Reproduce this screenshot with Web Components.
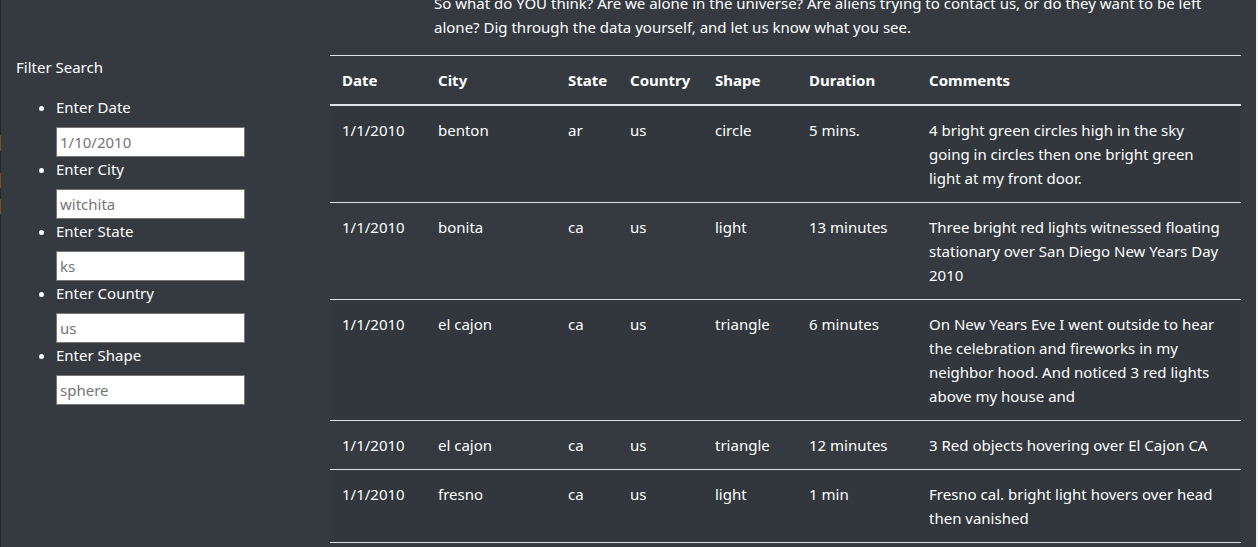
<!DOCTYPE html>
<html lang="en">
<head>
<meta charset="utf-8">
<title>UFO Sightings</title>
<style>
html, body { margin: 0; height: 100%; overflow: hidden; }
body { background: #f1f1f1; color: #fff; font: 15px/24px "Noto Sans", "Open Sans", sans-serif; }
</style>
</head>
<body>
<sightings-page>
  <filter-panel slot="filters" heading="Filter Search">
    <filter-field label="Enter Date" placeholder="1/10/2010"></filter-field>
    <filter-field label="Enter City" placeholder="witchita"></filter-field>
    <filter-field label="Enter State" placeholder="ks"></filter-field>
    <filter-field label="Enter Country" placeholder="us"></filter-field>
    <filter-field label="Enter Shape" placeholder="sphere"></filter-field>
  </filter-panel>
  <article-intro>So what do YOU think? Are we alone in the universe? Are aliens trying to contact us, or do they want to be left alone? Dig through the data yourself, and let us know what you see.</article-intro>
  <sightings-table></sightings-table>
</sightings-page>

<script>
class ShadowElement extends HTMLElement {
  constructor() {
    super();
    this.attachShadow({ mode: "open" });
  }
  connectedCallback() {
    this.shadowRoot.innerHTML = this.render();
  }
}

customElements.define("sightings-page", class extends ShadowElement {
  render() {
    return `<style>
      :host { display: grid; grid-template-columns: 1px minmax(0, 1fr); height: 100%; margin-right: 2px; overflow: hidden; background: #343a40; }
      .edge { background: linear-gradient(#24282c 135px, #7a5218 135px 151px, #24282c 151px 173px, #7a5218 173px 188px, #24282c 188px 199px, #7a5218 199px 214px, #24282c 214px); }
      .layout { display: grid; grid-template-columns: 314px minmax(0, 1fr); padding: 0 15px; }
      aside { padding-top: 55px; }
      main { min-width: 0; }
    </style>
    <div class="edge"></div>
    <div class="layout">
      <aside><slot name="filters"></slot></aside>
      <main><slot></slot></main>
    </div>`;
  }
});

customElements.define("article-intro", class extends ShadowElement {
  render() {
    return `<style>
      :host { display: block; margin-top: -9px; }
      p { margin: 0 0 16px; padding: 0 15px 0 104px; }
    </style>
    <p><slot></slot></p>`;
  }
});

customElements.define("filter-panel", class extends ShadowElement {
  render() {
    return `<style>
      :host { display: block; }
      p { margin: 0 0 16px; }
      form { padding-left: 40px; }
    </style>
    <p>${this.getAttribute("heading")}</p>
    <form><slot></slot></form>`;
  }
});

customElements.define("filter-field", class extends ShadowElement {
  render() {
    return `<style>
      :host { display: list-item; list-style: disc; }
      label { display: block; margin-bottom: 8px; }
      input { display: block; box-sizing: border-box; width: 189px; height: 30px; margin: 0; padding: 1px 3px; border: 1px solid #767676; border-radius: 0; background: #fff; color: #212529; font: inherit; }
      input::placeholder { color: #757575; }
    </style>
    <label for="field">${this.getAttribute("label")}</label>
    <input id="field" type="text" placeholder="${this.getAttribute("placeholder")}">`;
  }
});

const columns = ["Date", "City", "State", "Country", "Shape", "Duration", "Comments"];
const sightings = [
  ["1/1/2010", "benton", "ar", "us", "circle", "5 mins.", "4 bright green circles high in the sky going in circles then one bright green light at my front door."],
  ["1/1/2010", "bonita", "ca", "us", "light", "13 minutes", "Three bright red lights witnessed floating stationary over San Diego New Years Day 2010"],
  ["1/1/2010", "el cajon", "ca", "us", "triangle", "6 minutes", "On New Years Eve I went outside to hear the celebration and fireworks in my neighbor hood. And noticed 3 red lights above my house and"],
  ["1/1/2010", "el cajon", "ca", "us", "triangle", "12 minutes", "3 Red objects hovering over El Cajon CA"],
  ["1/1/2010", "fresno", "ca", "us", "light", "1 min", "Fresno cal. bright light hovers over head then vanished"]
];

customElements.define("sightings-table", class extends ShadowElement {
  render() {
    return `<style>
      :host { display: block; }
      table { width: 100%; table-layout: fixed; border-spacing: 0; border-bottom: 1px solid #dee2e6; }
      .date { width: 96px; } .city { width: 130px; } .state { width: 62px; } .country { width: 85px; }
      .shape { width: 94px; } .duration { width: 120px; }
      th, td { padding: 12px; border-top: 1px solid #dee2e6; text-align: left; vertical-align: top; }
      th { border-bottom: 2px solid #dee2e6; padding-right: 0; font-weight: 700; }
      td:last-child { padding-right: 20px; }
      tbody tr:first-child td { border-top: 0; }
      tbody tr:nth-child(odd) { background: rgba(0, 0, 0, .05); }
    </style>
    <table>
      <colgroup>${columns.map(c => `<col class="${c.toLowerCase()}">`).join("")}</colgroup>
      <thead><tr>${columns.map(c => `<th scope="col">${c}</th>`).join("")}</tr></thead>
      <tbody>${sightings.map(row => `<tr>${row.map(v => `<td>${v}</td>`).join("")}</tr>`).join("")}</tbody>
    </table>`;
  }
});
</script>
</body>
</html>
